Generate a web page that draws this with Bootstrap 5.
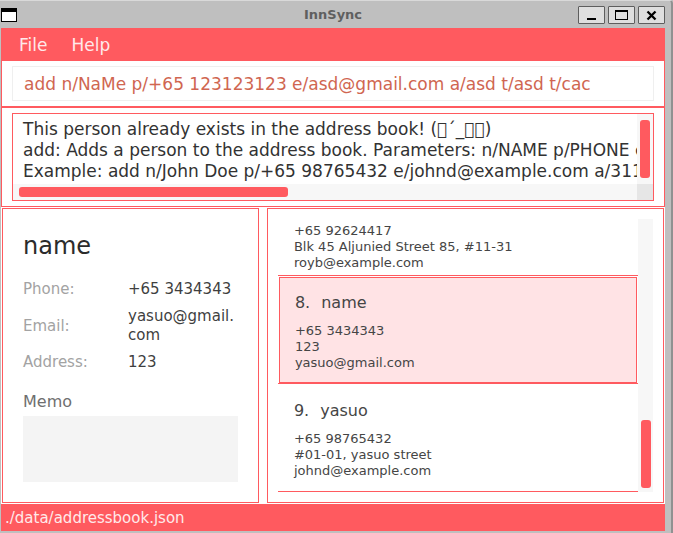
<!DOCTYPE html>
<html lang="en">
<head>
<meta charset="utf-8">
<meta name="viewport" content="width=device-width, initial-scale=1">
<title>InnSync</title>
<link href="https://cdn.jsdelivr.net/npm/bootstrap@5.3.0/dist/css/bootstrap.min.css" rel="stylesheet">
<style>
:root { --coral: #ff5a5f; --chrome: #bfbfbf; --track: #f7f7f7; }
body { font-family: "DejaVu Sans", sans-serif; font-size: 17px; line-height: 21px; color: #2b2b2b; background: var(--chrome); }
.app-window { padding: 0 6px 2px 1px; background: var(--chrome); border-top: 1px solid #d9d9d9; border-right: 2px solid #919191; border-top-right-radius: 4px; }
.title-bar { display: grid; grid-template-columns: 1fr auto 1fr; height: 27px; font-size: 13px; line-height: 16px; color: #5f5f5f; }
.win-btn { width: 27px; height: 18px; padding: 0; background: #dfdfdf; border: 1px solid #5e5e5e; border-radius: 1px; display: flex; }
.window-buttons { gap: 3px; }
.menu-strip { background: var(--coral); height: 33px; padding: 2px 18px 0; gap: 24px; }
.menu-strip button { color: #ffe9ea; background: none; border: 0; padding: 0; }
.command-area { border: 1px solid var(--coral); border-top: 0; padding: 5px 10px; }
.command-area .form-control { height: 35px; padding: 0 11px; border: 1px solid #efefef; border-radius: 0; color: #d06651; font-size: 17px; line-height: 21px; }
.result-area { border: 1px solid var(--coral); padding: 5px 10px; }
.result-box { display: grid; grid-template-columns: 1fr 16px; grid-template-rows: 70px 16px; border: 1px solid var(--coral); }
.result-box textarea { width: 100%; height: 70px; padding: 5px 0 0 10px; border: 0; resize: none; overflow: hidden; white-space: pre; color: #323232; line-height: 21px; outline: 0; }
.track { background: var(--track); }
.thumb { background: var(--coral); border-radius: 3px; }
.result-v { padding: 6px 3px 6px 3px; }
.result-h { padding: 3px 6px; }
.result-h .thumb { width: 269px; height: 10px; }
.track-corner { background: #e6e6e6; }
.split { display: grid; grid-template-columns: 11fr 17fr; gap: 8px; padding: 1px; }
.panel { border: 1px solid var(--coral); min-width: 0; }
.detail { padding: 21px 20px 20px; }
.detail h1 { font-size: 24px; line-height: 32px; margin: 0 0 18px; color: #2b2b2b; }
.fields { display: grid; grid-template-columns: 105px 1fr; row-gap: 8px; align-items: center; font-size: 15px; line-height: 19px; margin: 0 0 20px; }
.fields dt { font-weight: 400; color: #a3a3a3; }
.fields dd { margin: 0; color: #3f3f3f; }
.memo-label { font-size: 16px; line-height: 20px; margin-bottom: 4px; color: #6f6f6f; }
.memo { display: block; width: 100%; height: 66px; border: 0; background: #f4f4f4; resize: none; }
.people { padding: 10px; }
.person { border-bottom: 1px solid var(--coral); font-size: 13px; line-height: 16px; padding: 17px 16px 12px; color: #454545; }
.person h2 { font-size: 16px; line-height: 20px; margin: 0 0 10px; gap: 11px; }
.person-cut { padding-top: 4px; padding-bottom: 4px; }
.person-selected { padding: 1px 1px 0; }
.person-selected > div { background: #ffe3e5; border: 1px solid var(--coral); padding: 15px 15px 11px; }
.people-track { width: 15px; padding: 0 2px 4px 3px; }
.people-track .thumb { height: 68px; }
.status { background: var(--coral); color: #ffe9ea; font-size: 15px; line-height: 17px; padding: 6px 4px 4px; }
</style>
<script src="https://cdn.jsdelivr.net/npm/bootstrap@5.3.0/dist/js/bootstrap.bundle.min.js"></script>
</head>
<body>
<div class="app-window">
  <header class="title-bar align-items-center">
    <svg width="16" height="14" viewBox="0 0 16 14" shape-rendering="crispEdges" aria-hidden="true"><path fill="#000" d="M0 0h16v14H0z"/><path fill="#fff" d="M1 4h14v9H1z"/></svg>
    <span class="fw-bold">InnSync</span>
    <div class="window-buttons d-flex justify-content-end">
      <button class="win-btn" aria-label="Minimize"><svg width="25" height="16" shape-rendering="crispEdges"><path d="M8 11h9v2H8z"/></svg></button>
      <button class="win-btn" aria-label="Maximize"><svg width="25" height="16" shape-rendering="crispEdges"><path fill-rule="evenodd" d="M6 3h13v10H6zM7 5v7h11V5z"/></svg></button>
      <button class="win-btn" aria-label="Close"><svg width="25" height="16"><path d="M8.500 4.500L16.500 12.500M16.500 4.500L8.500 12.500" stroke="#000" stroke-width="2.300"/></svg></button>
    </div>
  </header>
  <nav class="menu-strip d-flex align-items-center">
    <button type="button">File</button>
    <button type="button">Help</button>
  </nav>
  <main class="bg-white">
    <div class="command-area">
      <input class="form-control" type="text" aria-label="Command" value="add n/NaMe p/+65 123123123 e/asd@gmail.com a/asd t/asd t/cac">
    </div>
    <div class="result-area">
      <div class="result-box">
        <textarea readonly aria-label="Result">This person already exists in the address book! (&#xE000;´_&#xE000;&#xE000;)
add: Adds a person to the address book. Parameters: n/NAME p/PHONE e/EMAIL a/ADDRESS
Example: add n/John Doe p/+65 98765432 e/johnd@example.com a/311, Clementi Ave 2</textarea>
        <div class="track result-v"><div class="thumb h-100"></div></div>
        <div class="track result-h"><div class="thumb"></div></div>
        <div class="track-corner"></div>
      </div>
    </div>
    <div class="split">
      <section class="panel detail">
        <h1 class="fw-normal">name</h1>
        <dl class="fields">
          <dt>Phone:</dt><dd>+65 3434343</dd>
          <dt>Email:</dt><dd>yasuo@gmail.<wbr>com</dd>
          <dt>Address:</dt><dd>123</dd>
        </dl>
        <label class="memo-label d-block" for="memo">Memo</label>
        <textarea class="memo" id="memo"></textarea>
      </section>
      <section class="panel people d-flex">
        <div class="flex-grow-1">
          <article class="person person-cut"><div>+65 92624417</div><div>Blk 45 Aljunied Street 85, #11-31</div><div>royb@example.com</div></article>
          <article class="person person-selected"><div>
            <h2 class="fw-normal d-flex"><span>8.</span><span>name</span></h2>
            +65 3434343<br>123<br>yasuo@gmail.com
          </div></article>
          <article class="person">
            <h2 class="fw-normal d-flex"><span>9.</span><span>yasuo</span></h2>
            +65 98765432<br>#01-01, yasuo street<br>johnd@example.com
          </article>
        </div>
        <div class="track people-track d-flex flex-column justify-content-end"><div class="thumb"></div></div>
      </section>
    </div>
  </main>
  <footer class="status">./data/addressbook.json</footer>
</div>
</body>
</html>
